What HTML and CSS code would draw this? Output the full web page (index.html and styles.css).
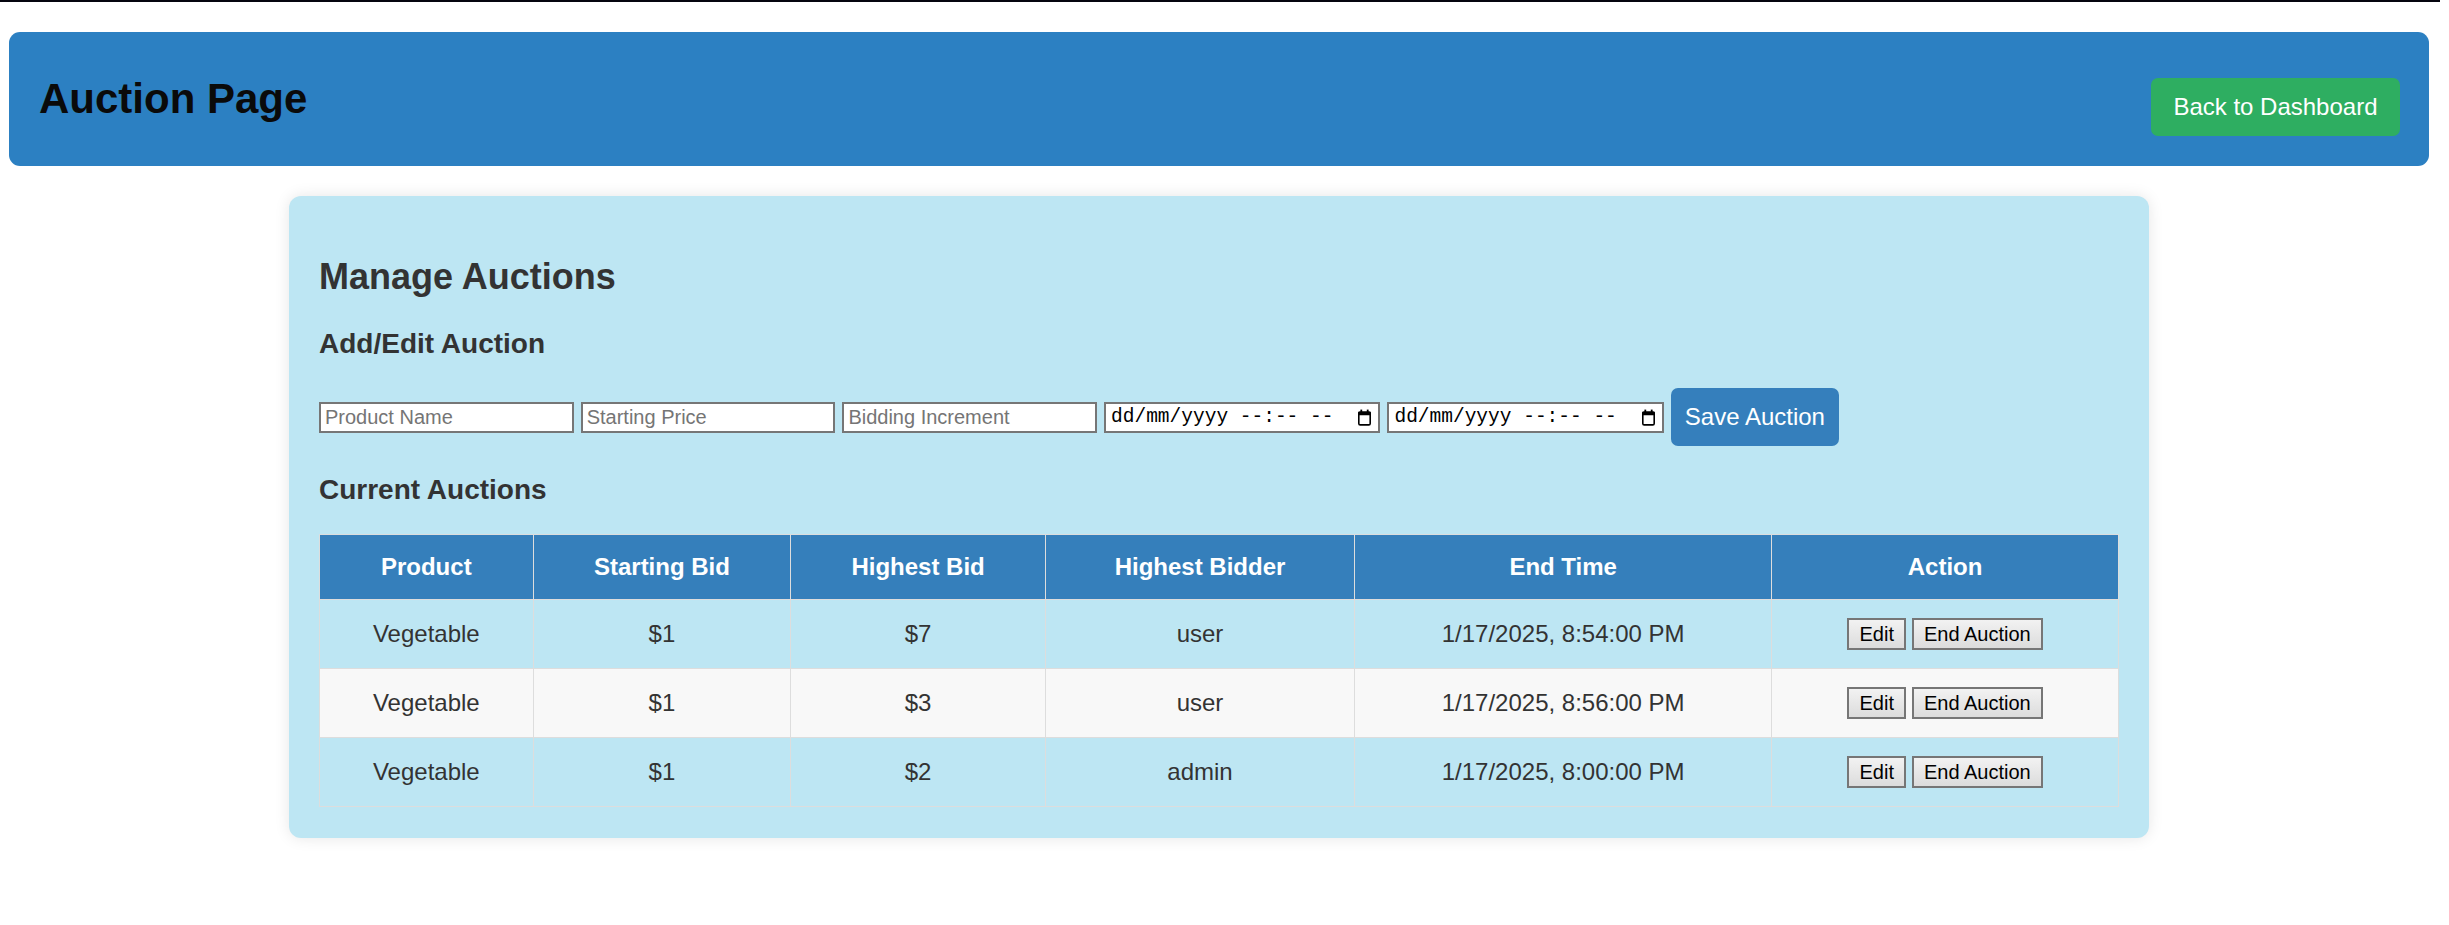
FILE: index.html
```html
<!DOCTYPE html>
<html lang="en">
<head>
<meta charset="utf-8">
<title>Auction Page</title>
<link rel="stylesheet" href="styles.css">
</head>
<body>
<div class="topline"></div>
<div class="page">
  <header class="header">
    <h1 class="title">Auction Page</h1>
    <button class="btn btn-green">Back to Dashboard</button>
  </header>

  <main class="card">
    <h2 class="card-title">Manage Auctions</h2>
    <h3 class="section-title">Add/Edit Auction</h3>
    <form class="auction-form">
      <input class="text-input" type="text" placeholder="Product Name">
      <input class="text-input" type="text" placeholder="Starting Price">
      <input class="text-input" type="text" placeholder="Bidding Increment">
      <div class="date-input"><span class="date-text">dd/mm/yyyy --:-- --</span><svg class="cal-icon" width="15" height="17" viewBox="0 0 15 17"><rect x="1.8" y="3.3" width="11.4" height="12.6" rx="1.4" fill="none" stroke="#000" stroke-width="1.6"/><rect x="1" y="2.6" width="13" height="3.6" rx="1.2" fill="#000"/><rect x="3.4" y="0.6" width="1.8" height="3" fill="#000"/><rect x="9.8" y="0.6" width="1.8" height="3" fill="#000"/></svg></div>
      <div class="date-input"><span class="date-text">dd/mm/yyyy --:-- --</span><svg class="cal-icon" width="15" height="17" viewBox="0 0 15 17"><rect x="1.8" y="3.3" width="11.4" height="12.6" rx="1.4" fill="none" stroke="#000" stroke-width="1.6"/><rect x="1" y="2.6" width="13" height="3.6" rx="1.2" fill="#000"/><rect x="3.4" y="0.6" width="1.8" height="3" fill="#000"/><rect x="9.8" y="0.6" width="1.8" height="3" fill="#000"/></svg></div>
      <button type="button" class="btn btn-blue">Save Auction</button>
    </form>

    <h3 class="section-title">Current Auctions</h3>
    <table class="auction-table">
      <colgroup>
        <col class="c1"><col class="c2"><col class="c3"><col class="c4"><col class="c5"><col class="c6">
      </colgroup>
      <thead>
        <tr>
          <th>Product</th>
          <th>Starting Bid</th>
          <th>Highest Bid</th>
          <th>Highest Bidder</th>
          <th>End Time</th>
          <th>Action</th>
        </tr>
      </thead>
      <tbody>
        <tr>
          <td>Vegetable</td>
          <td>$1</td>
          <td>$7</td>
          <td>user</td>
          <td>1/17/2025, 8:54:00 PM</td>
          <td class="actions"><button class="small-btn">Edit</button><button class="small-btn">End Auction</button></td>
        </tr>
        <tr>
          <td>Vegetable</td>
          <td>$1</td>
          <td>$3</td>
          <td>user</td>
          <td>1/17/2025, 8:56:00 PM</td>
          <td class="actions"><button class="small-btn">Edit</button><button class="small-btn">End Auction</button></td>
        </tr>
        <tr>
          <td>Vegetable</td>
          <td>$1</td>
          <td>$2</td>
          <td>admin</td>
          <td>1/17/2025, 8:00:00 PM</td>
          <td class="actions"><button class="small-btn">Edit</button><button class="small-btn">End Auction</button></td>
        </tr>
      </tbody>
    </table>
  </main>
</div>
</body>
</html>
```

FILE: styles.css
```css
html, body {
  margin: 0;
  padding: 0;
  background: #ffffff;
}

body {
  font-family: "Liberation Sans", Arial, sans-serif;
  font-size: 24px;
  color: #333333;
}

.topline {
  height: 2px;
  width: calc(100% - 9px);
  background: #05050f;
}

.page {
  padding: 30px 20px 40px 9px;
}

.header {
  display: flex;
  justify-content: space-between;
  align-items: center;
  height: 134px;
  box-sizing: border-box;
  padding: 0 29px 0 30px;
  background: #2c80c2;
  border-radius: 11px;
}

.title {
  margin: 0;
  font-size: 42px;
  font-weight: bold;
  color: #0a0a0a;
}

.btn {
  font-family: "Liberation Sans", Arial, sans-serif;
  font-size: 24px;
  color: #ffffff;
  border: none;
  border-radius: 7px;
  cursor: pointer;
}

.btn-green {
  background: #2eae61;
  padding: 15px 22.5px;
  margin-top: 16px;
}

.btn-blue {
  background: #357fbc;
  padding: 15px 14px;
}

.card {
  display: block;
  max-width: 1860px;
  box-sizing: border-box;
  margin: 30px auto 0;
  padding: 30px 30px 31px;
  background: #bde6f3;
  border-radius: 12px;
  box-shadow: 0 0 15px rgba(0, 0, 0, 0.1);
}

.card-title {
  font-size: 36px;
  font-weight: bold;
  margin: 30px 0;
}

.section-title {
  font-size: 28px;
  font-weight: bold;
  margin: 28px 0;
}

.auction-form {
  display: flex;
  align-items: center;
  gap: 7.1px;
}

.text-input {
  width: 254.6px;
  height: 31px;
  box-sizing: border-box;
  margin: 0;
  padding: 2px 4px;
  border: 2px solid #767676;
  border-radius: 0;
  background: #ffffff;
  font-family: "Liberation Sans", Arial, sans-serif;
  font-size: 20px;
  color: #000;
  outline: none;
}

.text-input::placeholder {
  color: #757575;
}

.date-input {
  width: 276.3px;
  height: 31px;
  box-sizing: border-box;
  display: flex;
  align-items: center;
  justify-content: space-between;
  padding: 0 6px 0 5px;
  border: 2px solid #767676;
  background: #ffffff;
}

.date-text {
  font-family: "Liberation Mono", "DejaVu Sans Mono", monospace;
  font-size: 19.5px;
  color: #000;
  white-space: pre;
}

.cal-icon {
  display: block;
  flex: none;
}

.auction-table {
  width: 100%;
  border-collapse: collapse;
  table-layout: fixed;
}

.c1 { width: 213.6px; }
.c2 { width: 257.7px; }
.c3 { width: 254.6px; }
.c4 { width: 309.3px; }
.c5 { width: 417px; }
.c6 { width: 346.8px; }

.auction-table th,
.auction-table td {
  border: 1px solid #dddddd;
  padding: 18px;
  text-align: center;
  font-size: 24px;
}

.auction-table th {
  background: #357fbb;
  color: #ffffff;
  font-weight: bold;
}

.auction-table td {
  color: #333333;
  height: 32px;
}

.auction-table tbody tr:nth-child(even) td {
  background: #f8f8f8;
}

.actions {
  white-space: nowrap;
}

.small-btn {
  font-family: "Liberation Sans", Arial, sans-serif;
  font-size: 20px;
  color: #000;
  padding: 2.5px 10px;
  margin: 0 3px;
  border: 2px solid #767676;
  border-radius: 0;
  background: linear-gradient(#f2f2f2, #dcdcdc);
  vertical-align: middle;
}
```
